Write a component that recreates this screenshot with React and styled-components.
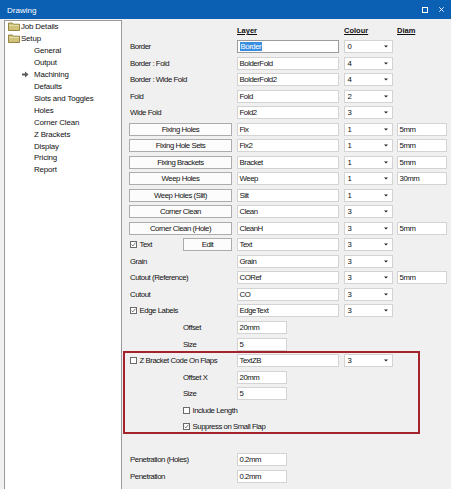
import React from 'react'
import styled, { createGlobalStyle } from 'styled-components'

const GlobalStyle = createGlobalStyle`
    html, body {
        margin: 0;
        padding: 0;
        background: #f0f0f0;
    }
    body {
        font-family: "Liberation Sans", Arial, sans-serif;
        color: #111;
    }
`

const ROW = 16.54

const Window = styled.div`
    width: 451px;
    height: 489px;
    display: flex;
    flex-direction: column;
    overflow: hidden;
    background: #f0f0f0;
`

const TitleBar = styled.div`
    height: 19px;
    flex: none;
    display: flex;
    align-items: center;
    padding-left: 7px;
    background: #0b60b3;
    color: #fff;
    font-size: 8px;
`

const Title = styled.span`
    flex: 1;
    margin-top: 1px;
`

const Controls = styled.div`
    display: flex;
    align-items: center;
    gap: 11px;
    padding-right: 7px;
`

const Body = styled.div`
    flex: 1;
    display: flex;
    padding: 1px 0 0 4px;
    min-height: 0;
`

const Tree = styled.div`
    width: 116px;
    flex: none;
    background: #fff;
    border: 1px solid #9a9a9a;
    border-bottom: none;
`

const TreeRow = styled.div`
    height: 11.92px;
    display: flex;
    align-items: center;
    padding-left: ${({ $level }) => ($level ? 17 : 3)}px;
    font-size: 7.9px;
    letter-spacing: -0.15px;
    white-space: nowrap;
`

const Marker = styled.span`
    width: ${({ $level }) => ($level ? 12 : 13)}px;
    flex: none;
    display: flex;
    align-items: center;
`

const Panel = styled.div`
    flex: 1;
    padding-top: 1.7px;
    font-size: 7.8px;
    letter-spacing: -0.45px;
`

const Row = styled.div`
    display: grid;
    grid-template-columns: 107px 107px 53px 50px;
    align-items: center;
    height: ${ROW}px;
    padding-left: ${({ $inGroup }) => ($inGroup ? 7 : 8)}px;
`

const Head = styled.span`
    font-size: 7.5px;
    font-weight: 700;
    letter-spacing: 0;
    text-decoration: underline;
    grid-column: ${({ $col }) => $col};
    margin-top: 1px;
`

const Label = styled.span`
    padding-left: ${({ $indent }) => $indent || 0}px;
    white-space: nowrap;
`

const Cell = styled.div`
    display: flex;
    align-items: center;
    grid-column: ${({ $span }) => ($span ? '1 / -1' : 'auto')};
    padding-left: ${({ $indent }) => $indent || 0}px;
`

const PushButton = styled.div`
    box-sizing: border-box;
    width: ${({ $w }) => $w}px;
    height: 13px;
    margin-left: ${({ $ml }) => $ml ?? -1}px;
    border: 1px solid #acacac;
    background: #fcfcfc;
    display: flex;
    align-items: center;
    justify-content: center;
    white-space: nowrap;
`

const Field = styled.div`
    box-sizing: border-box;
    width: ${({ $w }) => $w}px;
    height: 13px;
    border: 1px solid ${({ $focus }) => ($focus ? '#9c9c9c' : '#d3d3d3')};
    background: #fff;
    display: flex;
    align-items: center;
    padding-left: 1.5px;
    white-space: nowrap;
`

const Selected = styled.span`
    background: #3a8ee0;
    color: #fff;
    padding: 0 1px;
    line-height: 9px;
`

const Combo = styled(Field)`
    justify-content: space-between;
    padding: 0 4px 0 2.5px;
`

const Check = styled.span`
    display: flex;
    align-items: center;
    gap: 2.5px;
    white-space: nowrap;
`

const Box = styled.span`
    box-sizing: border-box;
    width: 7px;
    height: 7px;
    border: 1px solid #6a6a6a;
    background: #fff;
    display: flex;
    align-items: center;
    justify-content: center;
`

const Group = styled.div`
    box-sizing: border-box;
    width: 297px;
    height: 83px;
    margin: -1.5px 0 1.2px 1px;
    padding-top: 1.5px;
    outline: 2px solid #a3222b;
    outline-offset: -2px;
`

const Folder = () => (
    <svg width="12" height="9" viewBox="0 0 12 9">
        <path d="M0.5 1 h4 l1 1.2 h6 v6.3 h-11 z" fill="#cfc27a" stroke="#8b7c33" strokeWidth="0.9" />
        <path d="M1 3.4 h10" stroke="#e9e2b0" strokeWidth="0.9" />
    </svg>
)

const Arrow = () => (
    <svg width="7" height="7" viewBox="0 0 7 7">
        <path d="M0 2.4 h3 v-2 l3.6 3.1 -3.6 3.1 v-2 h-3 z" fill="#5b5b5b" />
    </svg>
)

const Tick = () => (
    <svg width="5" height="5" viewBox="0 0 5 5">
        <path d="M0.6 2.6 l1.3 1.3 2.6 -3.2" fill="none" stroke="#555" strokeWidth="0.8" />
    </svg>
)

const DropArrow = () => (
    <svg width="4" height="3" viewBox="0 0 4 3">
        <path d="M0 0.5 h4 l-2 2 z" fill="#222" />
    </svg>
)

const CheckBox = ({ checked, children }) => (
    <Check>
        <Box>{checked && <Tick />}</Box>
        {children}
    </Check>
)

const Colour = ({ value }) => (
    <Combo $w={49}>
        <span>{value}</span>
        <DropArrow />
    </Combo>
)

const tree = [
    { text: 'Job Details', level: 0 },
    { text: 'Setup', level: 0 },
    { text: 'General', level: 1 },
    { text: 'Output', level: 1 },
    { text: 'Machining', level: 1, current: true },
    { text: 'Defaults', level: 1 },
    { text: 'Slots and Toggles', level: 1 },
    { text: 'Holes', level: 1 },
    { text: 'Corner Clean', level: 1 },
    { text: 'Z Brackets', level: 1 },
    { text: 'Display', level: 1 },
    { text: 'Pricing', level: 1 },
    { text: 'Report', level: 1 },
]

const layers = [
    { label: 'Border', layer: 'Border', colour: '0', focus: true },
    { label: 'Border : Fold', layer: 'BolderFold', colour: '4' },
    { label: 'Border : Wide Fold', layer: 'BolderFold2', colour: '4' },
    { label: 'Fold', layer: 'Fold', colour: '2' },
    { label: 'Wide Fold', layer: 'Fold2', colour: '3' },
    { button: 'Fixing Holes', layer: 'Fix', colour: '1', diam: '5mm' },
    { button: 'Fixing Hole Sets', layer: 'Fix2', colour: '1', diam: '5mm' },
    { button: 'Fixing Brackets', layer: 'Bracket', colour: '1', diam: '5mm' },
    { button: 'Weep Holes', layer: 'Weep', colour: '1', diam: '30mm' },
    { button: 'Weep Holes (Slit)', layer: 'Slit', colour: '1' },
    { button: 'Corner Clean', layer: 'Clean', colour: '3' },
    { button: 'Corner Clean (Hole)', layer: 'CleanH', colour: '3', diam: '5mm' },
    { check: 'Text', checked: true, edit: true, layer: 'Text', colour: '3' },
    { label: 'Grain', layer: 'Grain', colour: '3' },
    { label: 'Cutout (Reference)', layer: 'CORef', colour: '3', diam: '5mm' },
    { label: 'Cutout', layer: 'CO', colour: '3' },
    { check: 'Edge Labels', checked: true, layer: 'EdgeText', colour: '3' },
]

function LayerRow({ r })
{
    let first
    if (r.button) first = <PushButton $w={103}>{r.button}</PushButton>
    else if (r.check) first = (
        <Cell>
            <CheckBox checked={r.checked}>{r.check}</CheckBox>
            {r.edit && <PushButton $w={49} $ml={0} style={{ marginLeft: 'auto', marginRight: 5 }}>Edit</PushButton>}
        </Cell>
    )
    else first = <Label>{r.label}</Label>

    return (
        <Row>
            {first}
            <Field $w={102} $focus={r.focus}>
                {r.focus ? <Selected>{r.layer}</Selected> : r.layer}
            </Field>
            <Colour value={r.colour} />
            {r.diam ? <Field $w={50}>{r.diam}</Field> : <span />}
        </Row>
    )
}

export default function App()
{
    return (
        <Window>
            <GlobalStyle />
            <TitleBar>
                <Title>Drawing</Title>
                <Controls>
                    <svg width="6" height="6" viewBox="0 0 6 6">
                        <rect x="0.5" y="0.5" width="5" height="5" fill="none" stroke="#fff" strokeWidth="1" />
                    </svg>
                    <svg width="5" height="5" viewBox="0 0 5 5">
                        <path d="M0.3 0.3 L4.7 4.7 M4.7 0.3 L0.3 4.7" stroke="#fff" strokeWidth="0.9" />
                    </svg>
                </Controls>
            </TitleBar>
            <Body>
                <Tree>
                    {tree.map(t => (
                        <TreeRow key={t.text} $level={t.level}>
                            <Marker $level={t.level}>
                                {t.level === 0 ? <Folder /> : t.current ? <Arrow /> : null}
                            </Marker>
                            {t.text}
                        </TreeRow>
                    ))}
                </Tree>
                <Panel>
                    <Row>
                        <Head $col={2}>Layer</Head>
                        <Head $col={3}>Colour</Head>
                        <Head $col={4}>Diam</Head>
                    </Row>
                    {layers.map(r => <LayerRow key={r.layer} r={r} />)}
                    <Row>
                        <Label $indent={53}>Offset</Label>
                        <Field $w={50}>20mm</Field>
                    </Row>
                    <Row>
                        <Label $indent={53}>Size</Label>
                        <Field $w={50}>5</Field>
                    </Row>
                    <Group>
                        <Row $inGroup>
                            <Cell><CheckBox>Z Bracket Code On Flaps</CheckBox></Cell>
                            <Field $w={102}>TextZB</Field>
                            <Colour value="3" />
                        </Row>
                        <Row $inGroup>
                            <Label $indent={53}>Offset X</Label>
                            <Field $w={50}>20mm</Field>
                        </Row>
                        <Row $inGroup>
                            <Label $indent={53}>Size</Label>
                            <Field $w={50}>5</Field>
                        </Row>
                        <Row $inGroup>
                            <Cell $span $indent={53}><CheckBox>Include Length</CheckBox></Cell>
                        </Row>
                        <Row $inGroup>
                            <Cell $span $indent={53}><CheckBox checked>Suppress on Small Flap</CheckBox></Cell>
                        </Row>
                    </Group>
                    <Row />
                    <Row>
                        <Label>Penetration (Holes)</Label>
                        <Field $w={50}>0.2mm</Field>
                    </Row>
                    <Row>
                        <Label>Penetration</Label>
                        <Field $w={50}>0.2mm</Field>
                    </Row>
                </Panel>
            </Body>
        </Window>
    )
}
